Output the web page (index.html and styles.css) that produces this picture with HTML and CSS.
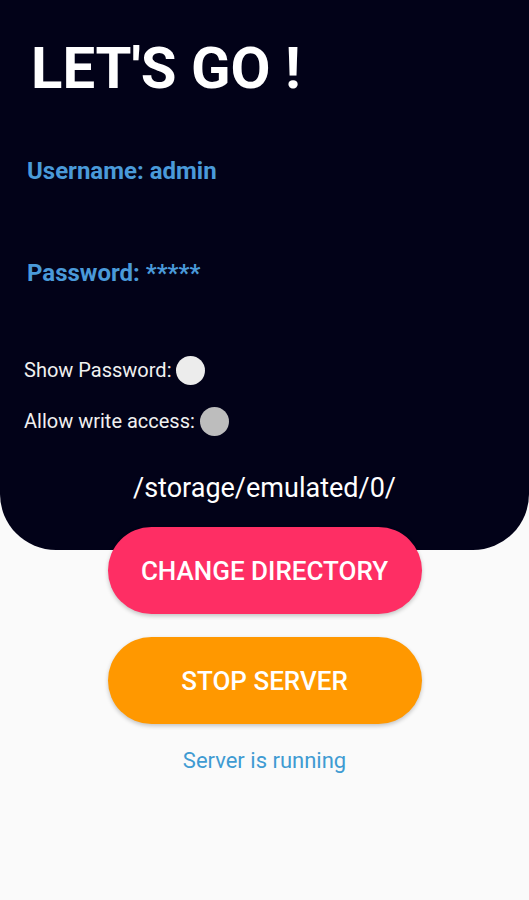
FILE: index.html
```html
<!DOCTYPE html>
<html>
<head>
<meta charset="UTF-8">
<title>FTP Server</title>
<link rel="stylesheet" href="styles.css">
</head>
<body>
<div class="panel">
    <h1 class="title">LET'S GO !</h1>
    <p class="cred user">Username: admin</p>
    <p class="cred pass">Password: *****</p>
    <div class="opt opt-show">
        <span>Show Password:</span>
        <span class="knob knob-on"></span>
    </div>
    <div class="opt opt-write">
        <span>Allow write access:</span>
        <span class="knob knob-off"></span>
    </div>
    <p class="path">/storage/emulated/0/</p>
</div>
<div class="actions">
    <button class="btn btn-dir">CHANGE DIRECTORY</button>
    <button class="btn btn-stop">STOP SERVER</button>
    <p class="status">Server is running</p>
</div>
</body>
</html>
```
FILE: styles.css
```css
*{margin:0;padding:0;box-sizing:border-box}
body{background:#fafafa;font-family:Roboto,"Liberation Sans",sans-serif;width:529px;height:900px;overflow:hidden}
.panel{background:#020218;height:550px;border-radius:0 0 56px 56px;padding-top:33px;color:#fff}
.title{font-size:58px;font-weight:700;line-height:70px;margin-left:31px}
.cred{font-size:24px;font-weight:700;line-height:28px;color:#4a9ad9;margin-left:27px}
.user{margin-top:54px}
.pass{margin-top:74px}
.opt{display:flex;align-items:center;gap:5px;height:30px;margin-left:24px;font-size:20px;line-height:24px;color:#f0f0f0}
.opt-show{margin-top:68px}
.opt-write{margin-top:21px}
.knob{width:29px;height:29px;border-radius:50%}
.knob-on{background:#ececec}
.knob-off{background:#bdbdbd}
.path{margin-top:36px;text-align:center;font-size:27px;line-height:32px}
.actions{display:flex;flex-direction:column;align-items:center;margin-top:-23px;position:relative}
.btn{width:314px;height:87px;border:none;border-radius:44px;color:#fff;font-family:Roboto,"Liberation Sans",sans-serif;font-size:26px;font-weight:500;box-shadow:0 2px 4px rgba(0,0,0,.22)}
.btn-dir{background:#fe2e64}
.btn-stop{background:#ff9800;margin-top:23px}
.status{margin-top:24px;font-size:22px;line-height:26px;color:#3f9bd2}
```
